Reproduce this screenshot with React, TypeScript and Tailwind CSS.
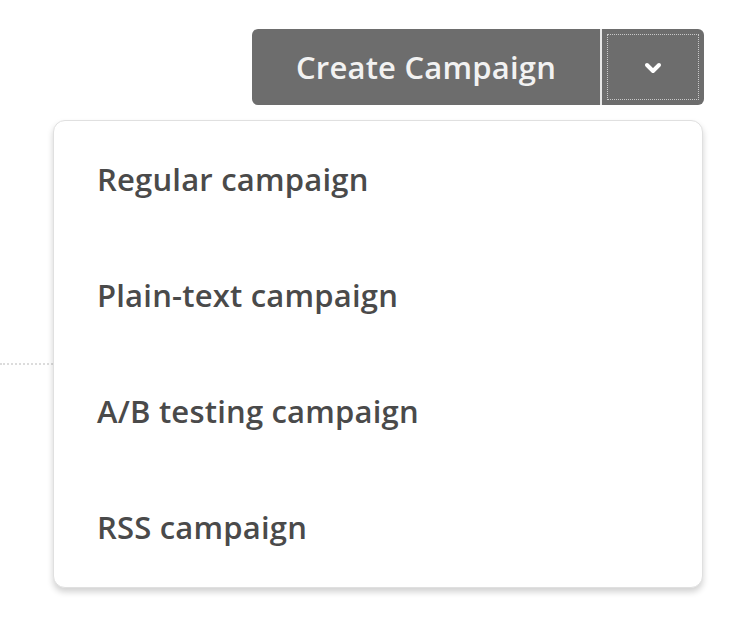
import React from "react";

const items = ["Regular campaign", "Plain-text campaign", "A/B testing campaign", "RSS campaign"];

export default function App() {
  return (
    <div
      className="relative w-[750px] h-[621px] bg-white overflow-hidden"
      style={{ fontFamily: '"Open Sans", "Liberation Sans", sans-serif' }}
    >
      {/* dotted rule behind the menu */}
      <div className="absolute left-0 top-[363px] w-[56px] border-t-2 border-dotted border-[#dcdcdc]" />

      <div className="flex justify-end pt-[29px] pr-[46px]">
        <div className="flex h-[76px] rounded-[6px] overflow-hidden bg-[#6d6d6d]">
          <button
            type="button"
            className="w-[348px] flex items-center justify-center text-[#f2f2f2] text-[31px] font-semibold tracking-[0.2px]"
          >
            Create Campaign
          </button>
          <div className="w-[2px] bg-[#e8e8e8]" />
          <div className="w-[102px] p-[5px] flex">
            <div className="flex-1 flex items-center justify-center pt-[2px] border border-dotted border-[#c9c9c9]">
              <svg width="20" height="14" viewBox="0 0 20 14" fill="none" stroke="white" strokeWidth="4" strokeLinecap="round" strokeLinejoin="round">
                <polyline points="4 4 10 10 16 4" />
              </svg>
            </div>
          </div>
        </div>
      </div>

      <div className="relative ml-[53px] mt-[15px] w-[650px] py-[1px] bg-white border border-[#e0e0e0] rounded-[12px] shadow-[0_4px_6px_rgba(0,0,0,0.18)]">
        {items.map((item) => (
          <div key={item} className="h-[116px] flex items-center pl-[43px] pb-[2px] text-[31px] font-semibold text-[#4a4a4a] tracking-[0.2px]">
            {item}
          </div>
        ))}
      </div>
    </div>
  );
}
